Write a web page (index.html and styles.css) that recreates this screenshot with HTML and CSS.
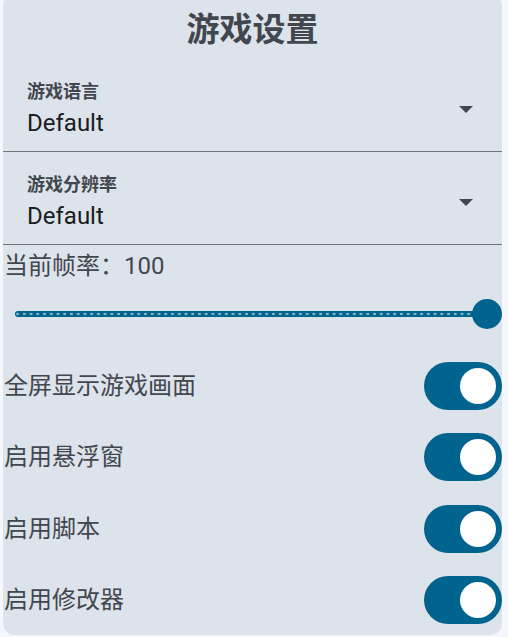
FILE: index.html
```html
<!DOCTYPE html>
<html lang="zh-CN">
<head>
<meta charset="utf-8">
<title>游戏设置</title>
<link rel="stylesheet" href="styles.css">
</head>
<body>
<div class="card">
  <div class="title">游戏设置</div>

  <div class="dropdown">
    <div class="dd-text">
      <div class="dd-label">游戏语言</div>
      <div class="dd-value">Default</div>
    </div>
    <svg class="dd-arrow" width="14" height="7" viewBox="0 0 14 7"><path d="M0 0 L14 0 L7 7 Z" fill="#44474e"/></svg>
  </div>

  <div class="dropdown">
    <div class="dd-text">
      <div class="dd-label">游戏分辨率</div>
      <div class="dd-value">Default</div>
    </div>
    <svg class="dd-arrow" width="14" height="7" viewBox="0 0 14 7"><path d="M0 0 L14 0 L7 7 Z" fill="#44474e"/></svg>
  </div>

  <div class="fps">当前帧率：100</div>

  <div class="slider">
    <div class="track">
      <div class="thumb"></div>
    </div>
  </div>

  <div class="switches">
    <div class="row"><span class="row-label">全屏显示游戏画面</span><span class="switch"><span class="knob"></span></span></div>
    <div class="row"><span class="row-label">启用悬浮窗</span><span class="switch"><span class="knob"></span></span></div>
    <div class="row"><span class="row-label">启用脚本</span><span class="switch"><span class="knob"></span></span></div>
    <div class="row"><span class="row-label">启用修改器</span><span class="switch"><span class="knob"></span></span></div>
  </div>
</div>
</body>
</html>
```

FILE: styles.css
```css
html, body {
  margin: 0;
  padding: 0;
  overflow: hidden;
}

body {
  background: #f4f8fd;
  font-family: Roboto, "Noto Sans CJK SC", sans-serif;
  color: #191c20;
}

.card {
  box-sizing: border-box;
  width: 499px;
  margin: -6px 0 0 3px;
  padding: 16px 0 11px 0;
  background: #dce3ea;
  border-radius: 12px;
}

.title {
  text-align: center;
  font-size: 33px;
  font-weight: 700;
  line-height: 40px;
  color: #42474e;
  margin-bottom: 9px;
}

.dropdown {
  display: flex;
  align-items: center;
  padding: 21px 29px 12px 24px;
  border-bottom: 1.5px solid #72777f;
}

.dd-text {
  flex: 1;
  display: flex;
  flex-direction: column;
}

.dd-label {
  font-size: 18px;
  line-height: 24px;
  font-weight: 700;
  color: #42474e;
  margin-bottom: 3px;
}

.dd-value {
  font-size: 24px;
  line-height: 32px;
  color: #191c20;
}

.dd-arrow {
  flex: none;
  display: block;
}

.fps {
  padding: 5px 1px 0 1px;
  font-size: 24px;
  line-height: 32px;
  color: #42474e;
}

.slider {
  display: flex;
  align-items: center;
  height: 30px;
  margin-top: 17px;
  padding: 0 15px 0 12px;
}

.track {
  position: relative;
  flex: 1;
  height: 6px;
  border-radius: 3px;
  background-color: #00648e;
  background-image: radial-gradient(circle, rgba(255, 255, 255, 0.5) 1.1px, rgba(255, 255, 255, 0) 1.6px);
  background-size: 6.74px 6px;
  background-position: -0.8px 0;
  background-repeat: repeat-x;
}

.thumb {
  position: absolute;
  right: -15px;
  top: 50%;
  width: 30px;
  height: 30px;
  margin-top: -15px;
  border-radius: 50%;
  background: #00648e;
}

.switches {
  display: flex;
  flex-direction: column;
  gap: 23.33px;
  margin-top: 33px;
}

.row {
  display: flex;
  align-items: center;
  justify-content: space-between;
  height: 48px;
  padding-left: 1px;
}

.row-label {
  font-size: 24px;
  line-height: 32px;
  color: #42474e;
}

.switch {
  box-sizing: border-box;
  display: flex;
  align-items: center;
  justify-content: flex-end;
  width: 78px;
  height: 48px;
  padding-right: 6px;
  border-radius: 24px;
  background: #00648e;
}

.knob {
  width: 36px;
  height: 36px;
  border-radius: 50%;
  background: #ffffff;
}
```
